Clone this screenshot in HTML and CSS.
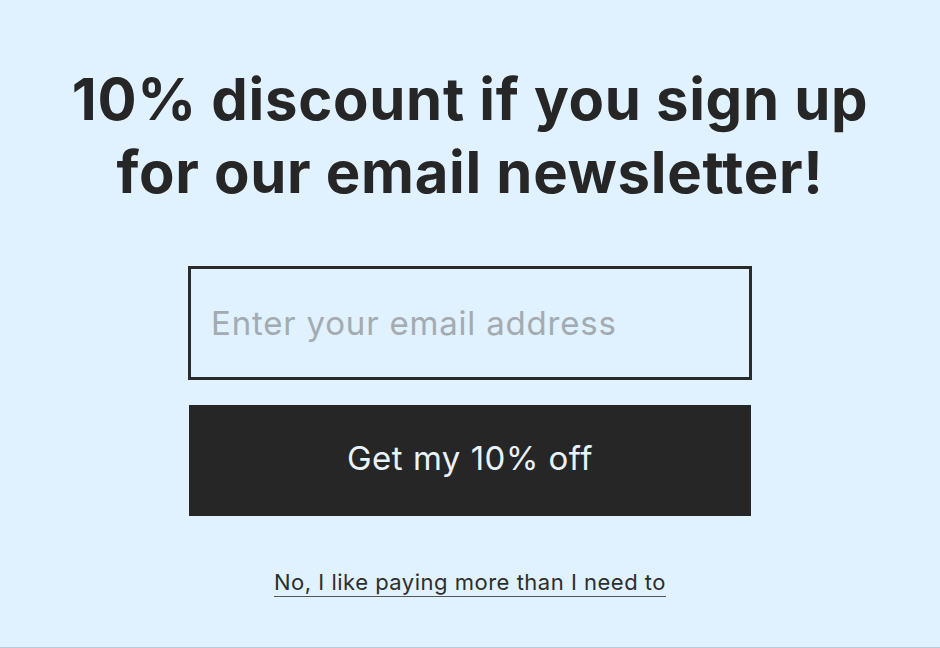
FILE: index.html
```html
<!DOCTYPE html>
<html lang="en">
<head>
<meta charset="utf-8">
<title>Newsletter signup</title>
<link rel="stylesheet" href="styles.css">
</head>
<body>
<main class="signup">
  <h1 class="signup__title">10% discount if you sign up for our email newsletter!</h1>
  <form class="signup__form">
    <input class="signup__input" type="email" placeholder="Enter your email address">
    <button class="signup__button" type="button">Get my 10% off</button>
  </form>
  <a class="signup__decline" href="#">No, I like paying more than I need to</a>
</main>
</body>
</html>
```

FILE: styles.css
```css
html, body {
  margin: 0;
  padding: 0;
}
body {
  background: #e0f1ff;
  font-family: Inter, "Noto Sans", sans-serif;
  color: #262626;
  height: 647px;
  border-bottom: 1px solid #b9c9d6;
  overflow: hidden;
}
.signup {
  display: flex;
  flex-direction: column;
  align-items: center;
  padding-top: 63px;
}
.signup__title {
  margin: 0;
  max-width: 820px;
  font-size: 58px;
  line-height: 73px;
  font-weight: 700;
  text-align: center;
  letter-spacing: 0.7px;
  color: #262626;
}
.signup__form {
  display: flex;
  flex-direction: column;
  align-items: center;
  gap: 25px;
  margin-top: 57px;
}
.signup__input {
  box-sizing: border-box;
  width: 564px;
  height: 114px;
  border: 3px solid #2a2a2a;
  background: transparent;
  padding: 0 20px;
  font-family: inherit;
  font-size: 33px;
  letter-spacing: 0.8px;
  color: #262626;
  outline: none;
}
.signup__input::placeholder {
  color: #a3abb0;
}
.signup__button {
  box-sizing: border-box;
  width: 562px;
  height: 111px;
  border: none;
  padding: 0 0 5px;
  background: #262626;
  color: #e9f2fa;
  font-family: inherit;
  font-size: 33px;
  letter-spacing: 0.5px;
  cursor: pointer;
}
.signup__decline {
  margin-top: 53px;
  font-size: 22px;
  letter-spacing: 0.5px;
  color: #2e2e2e;
  text-decoration: underline;
  text-decoration-color: #555;
  text-underline-offset: 6px;
  text-decoration-thickness: 1px;
}
```
